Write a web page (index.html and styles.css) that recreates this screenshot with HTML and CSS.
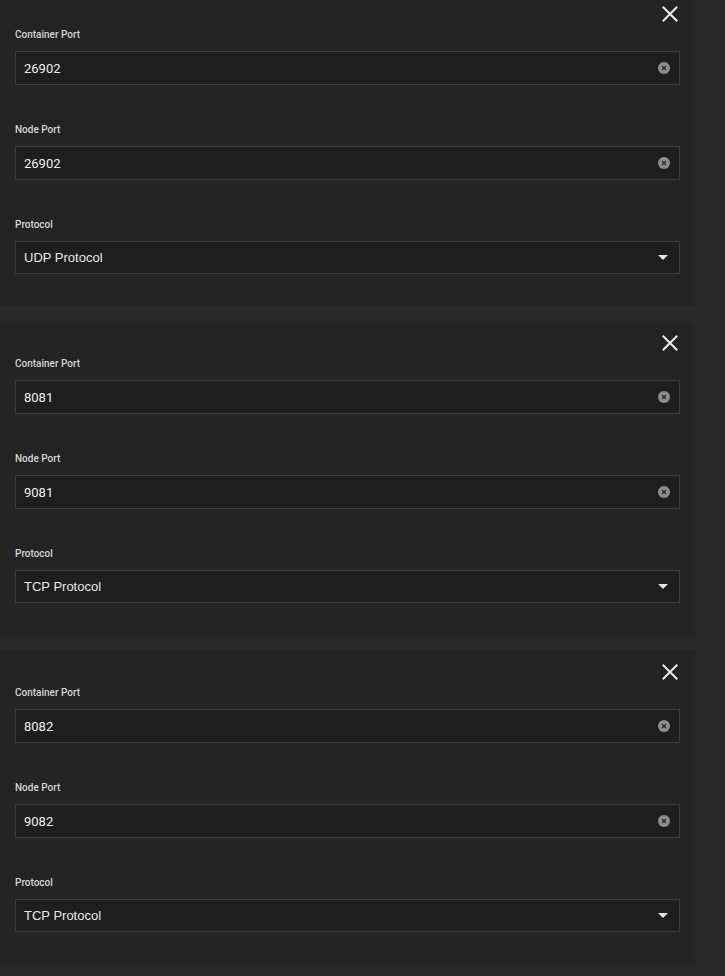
FILE: index.html
```html
<!DOCTYPE html>
<html>
<head>
<meta charset="utf-8">
<link rel="stylesheet" href="styles.css">
</head>
<body>
<div class="list">
  <section class="card">
    <div class="card-head">
      <button class="close" aria-label="Remove"><svg width="20" height="20" viewBox="0 0 20 20"><path d="M3.5 3.5L16.5 16.5M16.5 3.5L3.5 16.5" stroke="#ececec" stroke-width="2" stroke-linecap="square" fill="none"/></svg></button>
    </div>
    <div class="field">
      <label class="label">Container Port</label>
      <div class="box"><span class="value">26902</span><span class="clear"><svg width="12" height="12" viewBox="0 0 12 12"><circle cx="6" cy="6" r="6" fill="#8d8d8d"/><path d="M4 4L8 8M8 4L4 8" stroke="#2b2b2b" stroke-width="1.4"/></svg></span></div>
    </div>
    <div class="field">
      <label class="label">Node Port</label>
      <div class="box"><span class="value">26902</span><span class="clear"><svg width="12" height="12" viewBox="0 0 12 12"><circle cx="6" cy="6" r="6" fill="#8d8d8d"/><path d="M4 4L8 8M8 4L4 8" stroke="#2b2b2b" stroke-width="1.4"/></svg></span></div>
    </div>
    <div class="field">
      <label class="label">Protocol</label>
      <div class="box select"><span class="value sel">UDP Protocol</span><span class="arrow"><svg width="10" height="5" viewBox="0 0 10 5"><path d="M0 0H10L5 5Z" fill="#e2e2e2"/></svg></span></div>
    </div>
  </section>

  <section class="card">
    <div class="card-head">
      <button class="close" aria-label="Remove"><svg width="20" height="20" viewBox="0 0 20 20"><path d="M3.5 3.5L16.5 16.5M16.5 3.5L3.5 16.5" stroke="#ececec" stroke-width="2" stroke-linecap="square" fill="none"/></svg></button>
    </div>
    <div class="field">
      <label class="label">Container Port</label>
      <div class="box"><span class="value">8081</span><span class="clear"><svg width="12" height="12" viewBox="0 0 12 12"><circle cx="6" cy="6" r="6" fill="#8d8d8d"/><path d="M4 4L8 8M8 4L4 8" stroke="#2b2b2b" stroke-width="1.4"/></svg></span></div>
    </div>
    <div class="field">
      <label class="label">Node Port</label>
      <div class="box"><span class="value">9081</span><span class="clear"><svg width="12" height="12" viewBox="0 0 12 12"><circle cx="6" cy="6" r="6" fill="#8d8d8d"/><path d="M4 4L8 8M8 4L4 8" stroke="#2b2b2b" stroke-width="1.4"/></svg></span></div>
    </div>
    <div class="field">
      <label class="label">Protocol</label>
      <div class="box select"><span class="value sel">TCP Protocol</span><span class="arrow"><svg width="10" height="5" viewBox="0 0 10 5"><path d="M0 0H10L5 5Z" fill="#e2e2e2"/></svg></span></div>
    </div>
  </section>

  <section class="card">
    <div class="card-head">
      <button class="close" aria-label="Remove"><svg width="20" height="20" viewBox="0 0 20 20"><path d="M3.5 3.5L16.5 16.5M16.5 3.5L3.5 16.5" stroke="#ececec" stroke-width="2" stroke-linecap="square" fill="none"/></svg></button>
    </div>
    <div class="field">
      <label class="label">Container Port</label>
      <div class="box"><span class="value">8082</span><span class="clear"><svg width="12" height="12" viewBox="0 0 12 12"><circle cx="6" cy="6" r="6" fill="#8d8d8d"/><path d="M4 4L8 8M8 4L4 8" stroke="#2b2b2b" stroke-width="1.4"/></svg></span></div>
    </div>
    <div class="field">
      <label class="label">Node Port</label>
      <div class="box"><span class="value">9082</span><span class="clear"><svg width="12" height="12" viewBox="0 0 12 12"><circle cx="6" cy="6" r="6" fill="#8d8d8d"/><path d="M4 4L8 8M8 4L4 8" stroke="#2b2b2b" stroke-width="1.4"/></svg></span></div>
    </div>
    <div class="field">
      <label class="label">Protocol</label>
      <div class="box select"><span class="value sel">TCP Protocol</span><span class="arrow"><svg width="10" height="5" viewBox="0 0 10 5"><path d="M0 0H10L5 5Z" fill="#e2e2e2"/></svg></span></div>
    </div>
  </section>
</div>
</body>
</html>
```

FILE: styles.css
```css
html, body {
  margin: 0;
  padding: 0;
  background: #292929;
}
body {
  font-family: Roboto, "Liberation Sans", sans-serif;
  color: #e6e6e6;
  width: 725px;
  height: 976px;
  overflow: hidden;
}
.list {
  display: flex;
  flex-direction: column;
  gap: 15px;
  margin-top: -8px;
  width: 695px;
}
.card {
  background: #242424;
  padding: 0 15px 32px;
  display: flex;
  flex-direction: column;
  gap: 38px;
}
.card-head {
  display: flex;
  justify-content: flex-end;
  padding-top: 12px;
  height: 20px;
  margin-bottom: -34px;
}
.close {
  width: 20px;
  height: 20px;
  padding: 0;
  border: 0;
  background: none;
  display: flex;
}
.field {
  display: flex;
  flex-direction: column;
  gap: 9px;
}
.label {
  font-size: 10px;
  line-height: 14px;
  font-weight: 500;
  color: #d4d4d4;
}
.box {
  height: 34px;
  box-sizing: border-box;
  border: 1px solid #3b3b3b;
  background: #1e1e1e;
  display: flex;
  align-items: center;
  padding: 0 10px 0 8px;
}
.value {
  flex: 1;
  font-size: 13px;
  line-height: 16px;
  padding-top: 2px;
  color: #f0f0f0;
}
.value.sel {
  font-family: "Liberation Sans", Arial, sans-serif;
  padding-top: 0;
  color: #e8e8e8;
}
.clear {
  display: flex;
  width: 12px;
  height: 12px;
  margin-right: -1px;
}
.arrow {
  display: flex;
  width: 10px;
  height: 5px;
  margin-right: 2px;
}
.select {
  padding-right: 10px;
  height: 33px;
}
.select .arrow {
  margin-right: 1px;
}
```
